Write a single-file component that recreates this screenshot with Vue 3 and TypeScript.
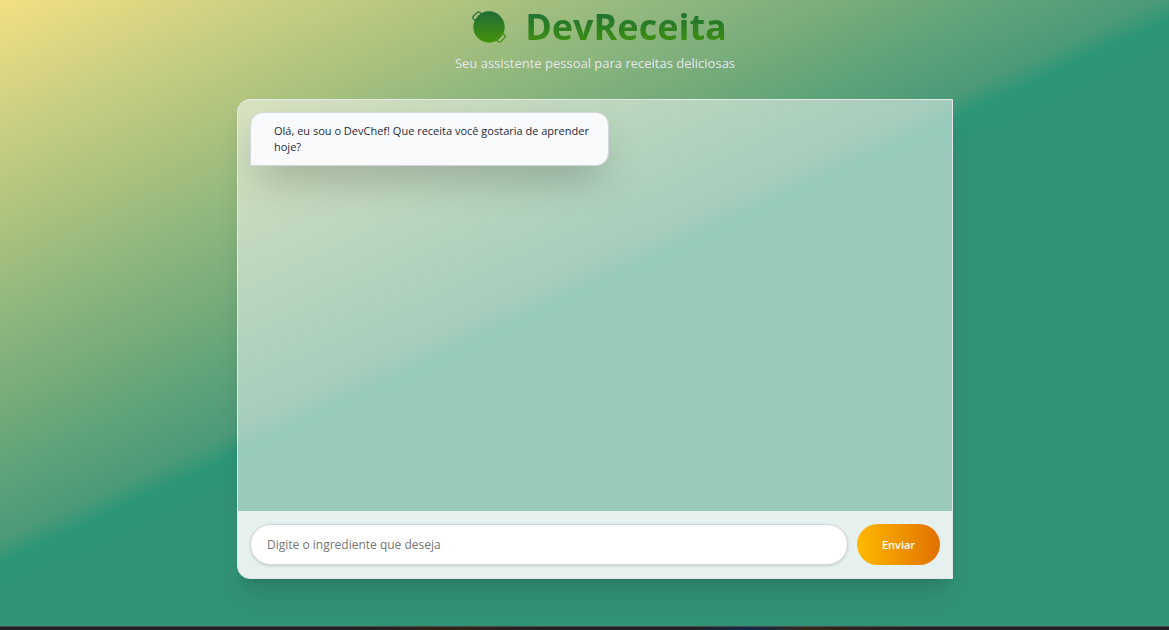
<script setup lang="ts">
import { ref } from 'vue'

interface Message {
  id: number
  text: string
}

const messages = ref<Message[]>([
  { id: 1, text: 'Olá, eu sou o DevChef! Que receita você gostaria de aprender hoje?' },
])
const draft = ref('')

function send() {
  const text = draft.value.trim()
  if (!text) return
  messages.value.push({ id: messages.value.length + 1, text })
  draft.value = ''
}
</script>

<template>
  <div class="page">
    <main class="shell">
      <header class="header">
        <h1 class="title">
          <svg class="logo" viewBox="0 0 34 34" aria-hidden="true">
            <defs>
              <linearGradient id="pot" x1="0" y1="0" x2="0" y2="34" gradientUnits="userSpaceOnUse">
                <stop offset="0" stop-color="#1f6a38" />
                <stop offset="1" stop-color="#479408" />
              </linearGradient>
            </defs>
            <circle cx="17" cy="17" r="15.7" fill="url(#pot)" />
            <g fill="none" stroke-width="1.3">
              <rect x="0.6" y="3.6" width="9" height="5" rx="2" transform="rotate(-42 5.1 6.1)" stroke="#2f7434" />
              <rect x="24.4" y="25.4" width="9" height="5" rx="2" transform="rotate(-42 28.9 27.9)" stroke="#47901a" />
            </g>
          </svg>
          <span class="name">DevReceita</span>
        </h1>
        <p class="tagline">Seu assistente pessoal para receitas deliciosas</p>
      </header>

      <section class="chat">
        <div class="messages">
          <p v-for="message in messages" :key="message.id" class="bubble">{{ message.text }}</p>
        </div>
        <form class="composer" @submit.prevent="send">
          <input
            v-model="draft"
            class="field"
            type="text"
            aria-label="Ingrediente"
            placeholder="Digite o ingrediente que deseja"
          />
          <button class="send" type="submit">Enviar</button>
        </form>
      </section>
    </main>
    <footer class="strip"></footer>
  </div>
</template>

<style>
body {
  margin: 0;
}
</style>

<style scoped>
.page {
  box-sizing: border-box;
  min-height: 100vh;
  display: flex;
  flex-direction: column;
  font-family: 'Open Sans', 'Noto Sans', sans-serif;
  background: linear-gradient(155deg, #f2e084 0%, #4b9a78 46%, #2d9677 48%, #329276 52%, #329276 100%);
}

.shell {
  flex: 1;
  display: flex;
  flex-direction: column;
  margin: 0 216px 47px 237px;
}

.header {
  text-align: center;
  padding-bottom: 25px;
}

.title {
  display: flex;
  align-items: center;
  justify-content: center;
  gap: 19px;
  margin: 0;
  padding-left: 9px;
  font-size: 36px;
  line-height: 53px;
  font-weight: 700;
}

.logo {
  width: 34px;
  height: 34px;
}

.name {
  color: transparent;
  background: linear-gradient(to bottom, #0f6440, #4b9a05);
  -webkit-background-clip: text;
  background-clip: text;
}

.tagline {
  margin: 0;
  font-size: 13px;
  line-height: 21px;
  color: #e5e7eb;
}

.chat {
  flex: 1;
  display: flex;
  flex-direction: column;
  overflow: hidden;
  border: 1px solid #e5e7eb;
  border-radius: 13px 0 0 13px;
  background: rgba(255, 255, 255, 0.5);
  box-shadow: 0 20px 25px -5px rgba(0, 0, 0, 0.1), 0 8px 10px -6px rgba(0, 0, 0, 0.1);
}

.messages {
  flex: 1;
  padding: 12px;
}

.bubble {
  box-sizing: border-box;
  width: 52%;
  margin: 0;
  padding: 10px 12px 10px 23px;
  border: 1px solid #d1d5dc;
  border-radius: 13px 13px 13px 0;
  background: #f9fafb;
  color: #1e2939;
  font-size: 11px;
  line-height: 16px;
  box-shadow: 0 20px 40px -10px rgba(0, 0, 0, 0.25);
}

.composer {
  display: flex;
  gap: 9px;
  padding: 13px 12px;
  background: rgba(249, 250, 251, 0.8);
}

.field {
  box-sizing: border-box;
  flex: 1;
  min-width: 0;
  height: 41px;
  padding: 0 16px;
  border: 1px solid #d1d5dc;
  border-radius: 21px;
  background: #ffffff;
  color: #1e2939;
  font-family: inherit;
  font-size: 12px;
  outline: none;
  box-shadow: 0 1px 3px rgba(0, 0, 0, 0.15);
}

.field::placeholder {
  color: #757575;
}

.send {
  width: 83px;
  height: 41px;
  padding: 0;
  border: 0;
  border-radius: 21px;
  background: linear-gradient(to right, #ffb900, #e17100);
  color: #ffffff;
  font-family: inherit;
  font-size: 11px;
  font-weight: 600;
  cursor: pointer;
}

.strip {
  height: 3px;
  border-top: 1px solid #4a4f4c;
  background: linear-gradient(
    to right,
    #1f2023 0%,
    #1f2023 31%,
    #33241a 38%,
    #1f2023 47%,
    #1f2023 59%,
    #142a4a 64%,
    #33281a 69%,
    #1f2023 78%
  );
}
</style>
